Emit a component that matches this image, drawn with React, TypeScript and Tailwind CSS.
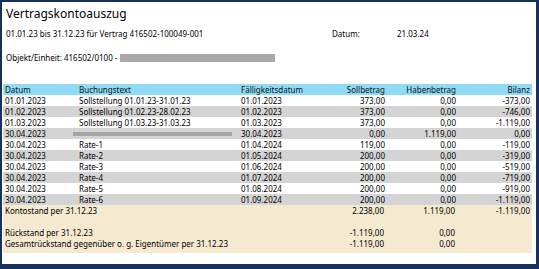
import React from "react";

const rows = [
  { d: "01.01.2023", t: "Sollstellung 01.01.23-31.01.23", f: "01.01.2023", s: "373,00", h: "0,00", b: "-373,00" },
  { d: "01.02.2023", t: "Sollstellung 01.02.23-28.02.23", f: "01.02.2023", s: "373,00", h: "0,00", b: "-746,00" },
  { d: "01.03.2023", t: "Sollstellung 01.03.23-31.03.23", f: "01.03.2023", s: "373,00", h: "0,00", b: "-1.119,00" },
  { d: "30.04.2023", t: "", f: "30.04.2023", s: "0,00", h: "1.119,00", b: "0,00", hidden: true },
  { d: "30.04.2023", t: "Rate-1", f: "01.04.2024", s: "119,00", h: "0,00", b: "-119,00" },
  { d: "30.04.2023", t: "Rate-2", f: "01.05.2024", s: "200,00", h: "0,00", b: "-319,00" },
  { d: "30.04.2023", t: "Rate-3", f: "01.06.2024", s: "200,00", h: "0,00", b: "-519,00" },
  { d: "30.04.2023", t: "Rate-4", f: "01.07.2024", s: "200,00", h: "0,00", b: "-719,00" },
  { d: "30.04.2023", t: "Rate-5", f: "01.08.2024", s: "200,00", h: "0,00", b: "-919,00" },
  { d: "30.04.2023", t: "Rate-6", f: "01.09.2024", s: "200,00", h: "0,00", b: "-1.119,00" },
];

const grid = "grid grid-cols-[73px_162px_92px_57px_71px_74px] h-[11px] items-center leading-[11px]";

export default function App() {
  return (
    <div
      className="w-[539px] h-[269px] box-border border-t-2 border-l-2 border-r-[3px] border-b-[5px] border-[#17305c] bg-white text-black overflow-hidden"
      style={{ fontFamily: '"Segoe UI", "Noto Sans", "Open Sans", sans-serif' }}
    >
      <div className="pl-[4px] pt-[4px] text-[12px] leading-[15px]">Vertragskontoauszug</div>
      <div className="flex text-[8px] leading-[11px] mt-[7px] pl-[4px]">
        <div className="w-[326px]">01.01.23 bis 31.12.23 für Vertrag 416502-100049-001</div>
        <div className="w-[65px]">Datum:</div>
        <div>21.03.24</div>
      </div>
      <div className="flex items-center text-[8px] leading-[11px] mt-[13px] pl-[4px]">
        <span>Objekt/Einheit: 416502/0100 -</span>
        <span className="ml-[3px] inline-block w-[155px] h-[8px] bg-[#a8a8a8]" />
      </div>
      <div className="ml-[1px] mt-[21px] w-[529px] text-[8px]">
        <div className={`${grid} bg-[#8fdaf5] text-[#111]`}>
          <div className="pl-[2px]">Datum</div>
          <div className="pl-[3px]">Buchungstext</div>
          <div className="pl-[3px]">Fälligkeitsdatum</div>
          <div className="text-right pr-[2px]">Sollbetrag</div>
          <div className="text-right pr-[2px]">Habenbetrag</div>
          <div className="text-right pr-[2px]">Bilanz</div>
        </div>
        {rows.map((r, i) => (
          <div key={i} className={`${grid} ${i % 2 === 1 ? "bg-[#d4d4d4]" : "bg-white"}`}>
            <div className="pl-[2px]">{r.d}</div>
            <div className="pl-[3px]">
              {r.hidden ? (
                <div className="relative h-[11px]">
                  <div className="absolute left-[-6px] top-[4px] w-[159px] h-[4px] bg-[#a4a4a4] blur-[0.5px]" />
                </div>
              ) : (
                r.t
              )}
            </div>
            <div className="pl-[3px]">{r.f}</div>
            <div className="text-right pr-[2px]">{r.s}</div>
            <div className="text-right pr-[2px]">{r.h}</div>
            <div className="text-right pr-[2px]">{r.b}</div>
          </div>
        ))}
        <div className="bg-[#f5ead0] pb-[4px]">
          <div className={grid}>
            <div className="pl-[2px] col-span-3 whitespace-nowrap">Kontostand per 31.12.23</div>
            <div className="text-right pr-[3px]">2.238,00</div>
            <div className="text-right pr-[3px]">1.119,00</div>
            <div className="text-right pr-[2px]">-1.119,00</div>
          </div>
          <div className="h-[11px]" />
          <div className={grid}>
            <div className="pl-[2px] col-span-3 whitespace-nowrap">Rückstand per 31.12.23</div>
            <div className="text-right pr-[3px]">-1.119,00</div>
            <div className="text-right pr-[3px]">0,00</div>
            <div />
          </div>
          <div className={grid}>
            <div className="pl-[2px] col-span-3 whitespace-nowrap">Gesamtrückstand gegenüber o. g. Eigentümer per 31.12.23</div>
            <div className="text-right pr-[3px]">-1.119,00</div>
            <div className="text-right pr-[3px]">0,00</div>
            <div />
          </div>
        </div>
      </div>
    </div>
  );
}
